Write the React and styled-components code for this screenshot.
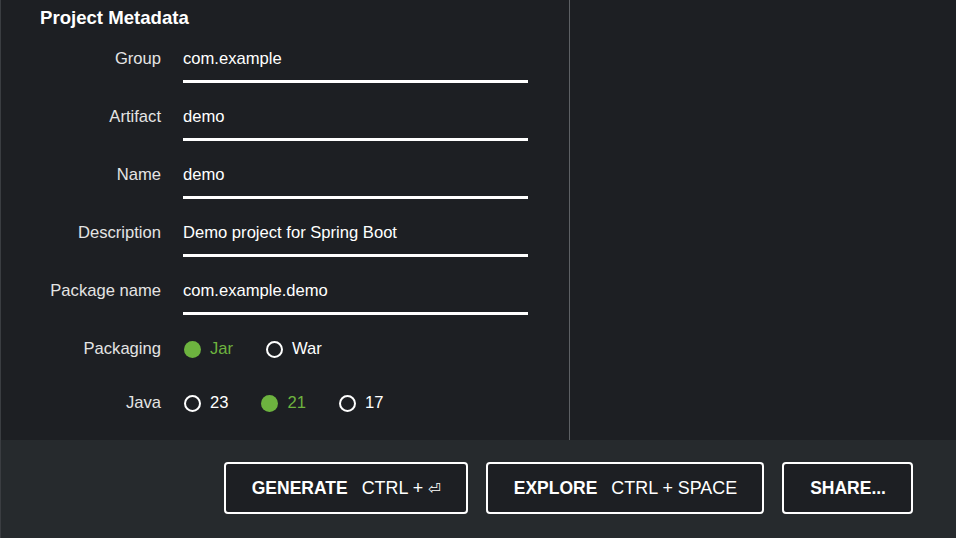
import React from "react";
import styled, { createGlobalStyle } from "styled-components";

const Global = createGlobalStyle`
  html, body { margin: 0; padding: 0; background: #1d1f23; }
  body { font-family: "Liberation Sans", Arial, sans-serif; }
  * { box-sizing: border-box; }
`;

const Page = styled.div`
  height: 538px;
  display: flex;
  flex-direction: column;
  border-left: 1px solid #3a3d41;
  background: #1d1f23;
`;

const Main = styled.div`
  flex: 1;
  display: flex;
`;

const LeftColumn = styled.section`
  width: 569px;
  border-right: 1px solid #5d6064;
  padding: 7px 0 0 38px;
`;

const RightColumn = styled.section`
  flex: 1;
`;

const Title = styled.h2`
  margin: 0 0 13px 1px;
  font-size: 18.6px;
  line-height: 21px;
  font-weight: 700;
  color: #ffffff;
`;

const Row = styled.div`
  display: grid;
  grid-template-columns: 122px 345px;
  column-gap: 22px;
  align-items: start;
  margin-bottom: ${(p) => p.$mb ?? 16}px;
`;

const Label = styled.label`
  text-align: right;
  font-size: 16.6px;
  line-height: 20px;
  padding-top: ${(p) => p.$pt ?? 8}px;
  color: #e4e4e4;
  white-space: nowrap;
`;

const TextInput = styled.input`
  display: block;
  width: 345px;
  height: 42px;
  margin: 0;
  padding: 8px 0 11px;
  border: none;
  border-bottom: 3px solid #ffffff;
  background: transparent;
  color: #ffffff;
  font-family: "Liberation Sans", Arial, sans-serif;
  font-size: 16.6px;
  line-height: 20px;
  outline: none;
`;

const RadioGroup = styled.div`
  display: flex;
  align-items: center;
  height: 20px;
`;

const RadioItem = styled.div`
  display: flex;
  align-items: center;
  margin-right: 32px;
  font-size: 16.6px;
  line-height: 20px;
  color: ${(p) => (p.$checked ? "#6db33f" : "#ffffff")};
`;

const Circle = styled.span`
  width: 17px;
  height: 17px;
  border-radius: 50%;
  margin-right: 9px;
  margin-left: 1px;
  flex: none;
  background: ${(p) => (p.$checked ? "#6db33f" : "transparent")};
  border: ${(p) => (p.$checked ? "none" : "2px solid #ffffff")};
`;

const Footer = styled.footer`
  height: 98px;
  flex: none;
  background: #262a2d;
  display: flex;
  justify-content: flex-end;
  align-items: center;
  gap: 18px;
  padding: 0 43px 2px 0;
`;

const Button = styled.button`
  height: 52px;
  padding: 0 25px 0 26px;
  border: 2px solid #ffffff;
  border-radius: 4px;
  background: #1d1f23;
  color: #ffffff;
  display: inline-flex;
  align-items: center;
  gap: 14px;
  font-family: "Liberation Sans", Arial, sans-serif;
  cursor: pointer;
`;

const Strong = styled.strong`
  font-weight: 700;
  font-size: 17.5px;
`;

const Shortcut = styled.span`
  font-weight: 400;
  font-size: 17.9px;
`;

const Key = styled.span`
  font-family: "DejaVu Sans", sans-serif;
  font-size: 15px;
`;

const fields = [
  ["Group", "com.example"],
  ["Artifact", "demo"],
  ["Name", "demo"],
  ["Description", "Demo project for Spring Boot"],
  ["Package name", "com.example.demo"],
];

function Radios({ options, value }) {
  return (
    <RadioGroup>
      {options.map((o) => (
        <RadioItem key={o} $checked={o === value}>
          <Circle $checked={o === value} />
          {o}
        </RadioItem>
      ))}
    </RadioGroup>
  );
}

export default function App() {
  return (
    <>
      <Global />
      <Page>
        <Main>
          <LeftColumn>
            <Title>Project Metadata</Title>
            {fields.map(([label, value], i) => (
              <Row key={label} $mb={i === fields.length - 1 ? 24 : 16}>
                <Label>{label}</Label>
                <TextInput defaultValue={value} readOnly />
              </Row>
            ))}
            <Row $mb={34}>
              <Label $pt={0}>Packaging</Label>
              <Radios options={["Jar", "War"]} value="Jar" />
            </Row>
            <Row $mb={0}>
              <Label $pt={0}>Java</Label>
              <Radios options={["23", "21", "17"]} value="21" />
            </Row>
          </LeftColumn>
          <RightColumn />
        </Main>
        <Footer>
          <Button>
            <Strong>GENERATE</Strong>
            <Shortcut>
              CTRL + <Key>⏎</Key>
            </Shortcut>
          </Button>
          <Button>
            <Strong>EXPLORE</Strong>
            <Shortcut>CTRL + SPACE</Shortcut>
          </Button>
          <Button>
            <Strong>SHARE...</Strong>
          </Button>
        </Footer>
      </Page>
    </>
  );
}
